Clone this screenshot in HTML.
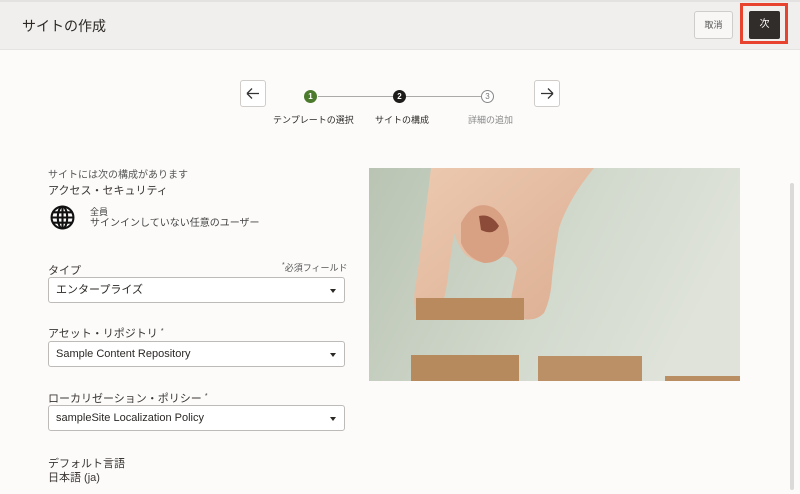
<!DOCTYPE html>
<html><head><meta charset="utf-8"><style>
*{margin:0;padding:0;box-sizing:border-box}
body{width:800px;height:494px;overflow:hidden;background:#fcfbfa;font-family:"Liberation Sans","Noto Sans CJK JP",sans-serif;color:#2b2825;position:relative}
.a{position:absolute;white-space:nowrap}
.hdr{position:absolute;left:0;top:0;width:800px;height:50px;background:#f1efed;border-top:2px solid #e4e2e0;border-bottom:1px solid #e6e4e2}
.btn{position:absolute;border:1px solid #cfccc9;background:#f8f7f6;border-radius:3px}
.sel{position:absolute;left:48px;width:297px;height:26px;border:1px solid #bdbab7;border-radius:3px;background:#fff;font-size:11px;line-height:24px;padding-left:7px}
.sel:after{content:"";position:absolute;right:8px;top:11px;border-left:3px solid transparent;border-right:3px solid transparent;border-top:4px solid #2b2825}
.lbl{font-size:11px;color:#3a3633}
.c{position:absolute;width:13px;height:13px;border-radius:50%;font-size:8px;font-weight:bold;text-align:center;line-height:13px}
sup{font-size:7px;vertical-align:0;position:relative;top:-4px}
</style></head><body>
<div class="hdr"></div>
<div class="a" style="left:22px;top:16px;font-size:14px;color:#2b2825">サイトの作成</div>
<div class="btn" style="left:694px;top:11px;width:39px;height:28px;font-size:9px;text-align:center;line-height:26px;color:#555">取消</div>
<div class="a" style="left:740px;top:3px;width:48px;height:41px;border:3px solid #e8432f"></div>
<div class="a" style="left:749px;top:11px;width:31px;height:28px;background:#312d2a;border-radius:2px;color:#fff;font-size:10px;text-align:center;line-height:28px">次</div>

<div class="btn" style="left:240px;top:80px;width:26px;height:27px;background:#fff"><svg width="24" height="25" viewBox="0 0 24 25"><path d="M6 12.5h12M6 12.5l5-5M6 12.5l5 5" stroke="#333" stroke-width="1.3" fill="none"/></svg></div>
<div class="btn" style="left:534px;top:80px;width:26px;height:27px;background:#fff"><svg width="24" height="25" viewBox="0 0 24 25"><path d="M6 12.5h12M18 12.5l-5-5M18 12.5l-5 5" stroke="#333" stroke-width="1.3" fill="none"/></svg></div>
<div class="a" style="left:318px;top:96px;width:75px;height:1px;background:#aaa"></div>
<div class="a" style="left:406px;top:96px;width:75px;height:1px;background:#aaa"></div>
<div class="c" style="left:304px;top:90px;background:#4b7a2d;color:#fff">1</div>
<div class="c" style="left:393px;top:90px;background:#1e1c1a;color:#fff">2</div>
<div class="c" style="left:481px;top:90px;border:1px solid #888;color:#777;line-height:11px;background:#fff;font-weight:normal">3</div>
<div class="a" style="left:273px;top:113px;font-size:9px">テンプレートの選択</div>
<div class="a" style="left:375px;top:113px;font-size:9px">サイトの構成</div>
<div class="a" style="left:468px;top:113px;font-size:9px;color:#888">詳細の追加</div>

<div class="a" style="left:48px;top:166px;font-size:10px;color:#555">サイトには次の構成があります</div>
<div class="a lbl" style="left:48px;top:182px">アクセス・セキュリティ</div>
<svg class="a" style="left:50px;top:205px" width="25" height="25" viewBox="0 0 24 24"><g fill="none" stroke="#111" stroke-width="2"><circle cx="12" cy="12" r="10.5"/><ellipse cx="12" cy="12" rx="4.5" ry="10.5"/><path d="M12 1.5v21M1.5 12h21M3 7h18M3 17h18"/></g></svg>
<div class="a" style="left:90px;top:205px;font-size:9px;color:#444">全員</div>
<div class="a" style="left:90px;top:214px;font-size:10px;color:#444">サインインしていない任意のユーザー</div>

<div class="a lbl" style="left:48px;top:262px">タイプ</div>
<div class="a" style="left:282px;top:261px;font-size:9px;color:#555"><sup>*</sup>必須フィールド</div>
<div class="sel" style="top:277px">エンタープライズ</div>
<div class="a lbl" style="left:48px;top:325px">アセット・リポジトリ <sup>*</sup></div>
<div class="sel" style="top:341px">Sample Content Repository</div>
<div class="a lbl" style="left:48px;top:390px">ローカリゼーション・ポリシー <sup>*</sup></div>
<div class="sel" style="top:405px">sampleSite Localization Policy</div>
<div class="a lbl" style="left:48px;top:455px">デフォルト言語</div>
<div class="a" style="left:48px;top:469px;font-size:11px;color:#3a3633">日本語 (ja)</div>

<svg class="a" style="left:369px;top:168px" width="371" height="213" viewBox="0 0 371 213">
<defs><linearGradient id="bg" x1="0" y1="0" x2="1" y2="0.3"><stop offset="0" stop-color="#b9c4b3"/><stop offset="0.6" stop-color="#d2d9cd"/><stop offset="1" stop-color="#dfe3da"/></linearGradient>
<linearGradient id="sk" x1="0" y1="0" x2="1" y2="1"><stop offset="0" stop-color="#ecc9b0"/><stop offset="1" stop-color="#dcae92"/></linearGradient></defs>
<rect width="371" height="213" fill="url(#bg)"/>
<path d="M62 0 L225 0 Q200 30 190 60 Q185 90 183 110 Q182 130 175 145 Q165 155 150 150 Q140 140 143 125 L148 100 Q140 85 130 90 Q110 100 95 85 Q88 75 85 65 L80 100 Q77 130 70 145 Q60 152 48 147 Q43 135 47 115 Q55 60 62 0Z" fill="url(#sk)"/>
<path d="M92 55 Q105 30 125 40 Q140 50 140 75 Q135 95 115 95 Q98 90 92 75Z" fill="#d9a184"/>
<path d="M110 48 Q122 45 130 58 Q125 68 112 62Z" fill="#8c4b38"/>
<rect x="47" y="130" width="108" height="22" fill="#b98a5d"/>
<rect x="42" y="187" width="108" height="26" fill="#b78a5e"/>
<rect x="169" y="188" width="104" height="25" fill="#bb9066"/>
<rect x="296" y="208" width="75" height="5" fill="#b98e62"/>
</svg>
<div class="a" style="left:790px;top:183px;width:4px;height:307px;background:#dcdad8;border-radius:2px"></div>
</body></html>
